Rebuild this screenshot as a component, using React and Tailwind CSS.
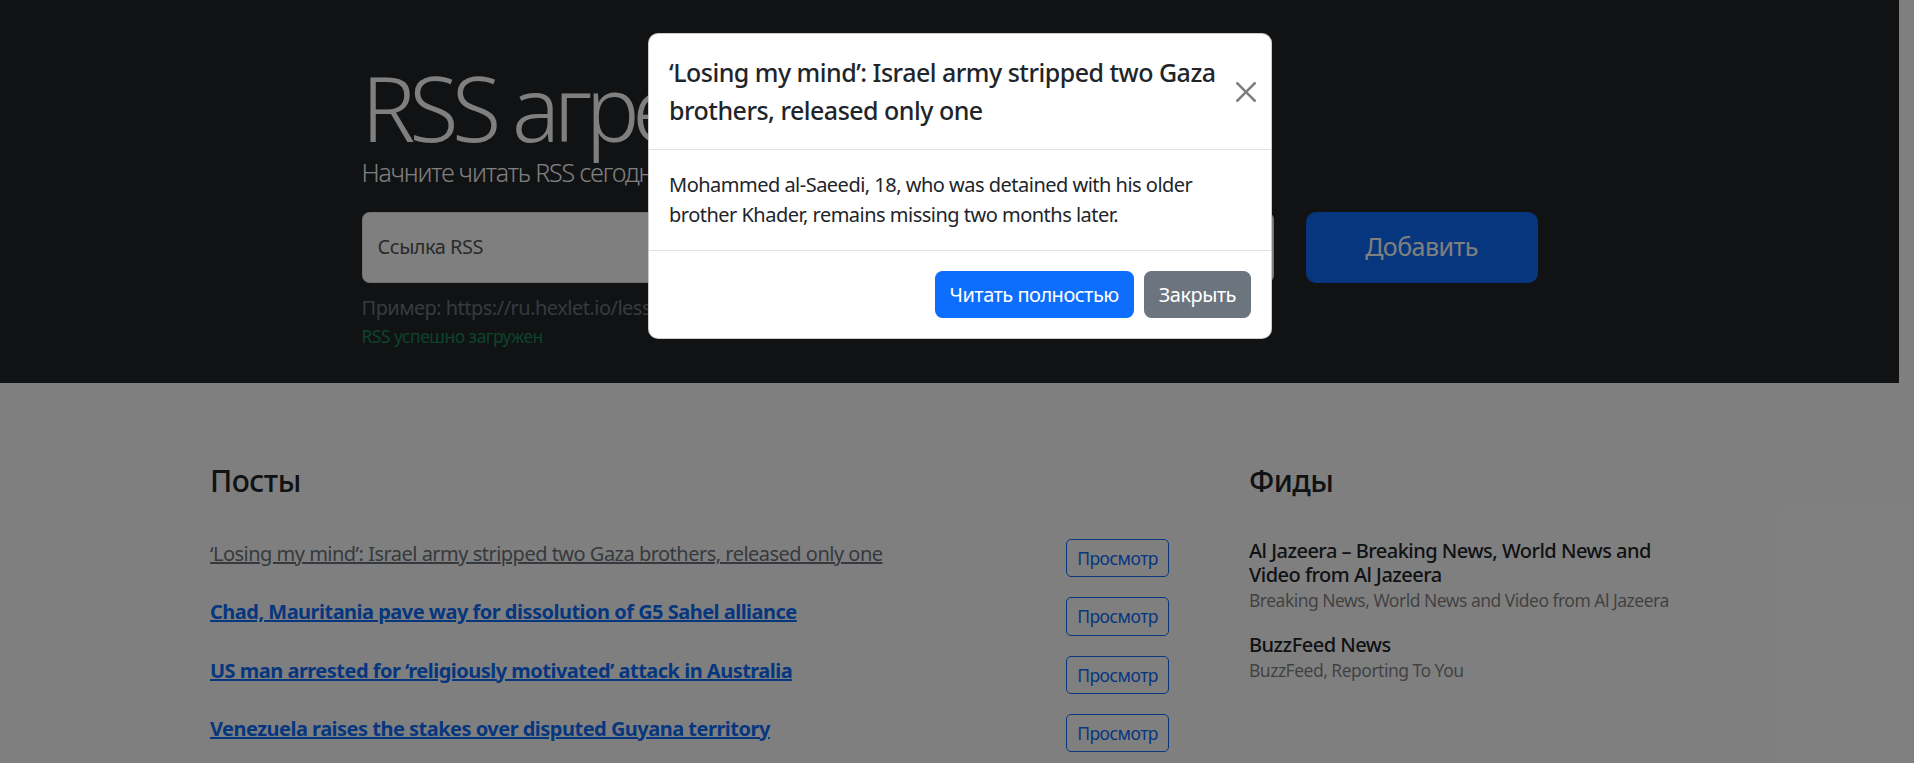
import React from 'react';

const FONT = { fontFamily: '"Noto Sans", "Open Sans", sans-serif' };

const posts = [
  { title: '‘Losing my mind’: Israel army stripped two Gaza brothers, released only one', visited: true },
  { title: 'Chad, Mauritania pave way for dissolution of G5 Sahel alliance', visited: false },
  { title: 'US man arrested for ‘religiously motivated’ attack in Australia', visited: false },
  { title: 'Venezuela raises the stakes over disputed Guyana territory', visited: false },
];

const feeds = [
  {
    title: 'Al Jazeera – Breaking News, World News and Video from Al Jazeera',
    description: 'Breaking News, World News and Video from Al Jazeera',
  },
  { title: 'BuzzFeed News', description: 'BuzzFeed, Reporting To You' },
];

const CloseIcon = () => (
  <svg viewBox="0 0 16 16" className="w-[20px] h-[20px]" fill="currentColor">
    <path d="M.293.293a1 1 0 0 1 1.414 0L8 6.586 14.293.293a1 1 0 1 1 1.414 1.414L9.414 8l6.293 6.293a1 1 0 0 1-1.414 1.414L8 9.414l-6.293 6.293a1 1 0 0 1-1.414-1.414L6.586 8 .293 1.707a1 1 0 0 1 0-1.414z" />
  </svg>
);

const Hero = () => (
  <section className="bg-[#212529] h-[383px] pt-[60px]">
    <div className="relative mx-auto w-[1176px] text-white">
      <h1 className="text-[90px] font-light leading-[94px] tracking-[-0.07em]">RSS агрегатор</h1>
      <p className="text-[25px] font-light leading-[37.5px] mb-[20px] tracking-[-0.045em]">
        Начните читать RSS сегодня! Это легко, это красиво.
      </p>
      <div className="flex gap-[32px]">
        <div className="flex-1 h-[71px] bg-white border border-[#dee2e6] rounded-[7.5px] flex items-center px-[15px]">
          <span className="text-[20px] text-[#212529]/80">Ссылка RSS</span>
        </div>
        <button className="w-[232px] h-[71px] rounded-[10px] bg-[#0d6efd] text-white text-[25px]">
          Добавить
        </button>
      </div>
      <p className="mt-[10px] text-[20px] leading-[30px] text-[#6c757d]">
        Пример: https://ru.hexlet.io/lessons.rss
      </p>
      <p className="absolute text-[17.5px] leading-[26.25px] text-[#198754]">RSS успешно загружен</p>
    </div>
  </section>
);

const Posts = () => (
  <div className="w-[999px]">
    <div className="p-[20px]">
      <h2 className="text-[30px] font-medium leading-[36px] mb-[10px] text-[#212529]">Посты</h2>
    </div>
    <ul>
      {posts.map((p) => (
        <li key={p.title} className="flex justify-between items-start px-[20px] py-[10px]">
          <a
            href="#"
            className={
              p.visited
                ? 'text-[20px] leading-[30px] underline text-[#6c757d]'
                : 'text-[20px] leading-[30px] underline font-bold text-[#0d6efd]'
            }
          >
            {p.title}
          </a>
          <button className="shrink-0 border border-[#0d6efd] text-[#0d6efd] rounded-[5px] px-[10px] py-[5px] text-[17.5px] leading-[26.25px]">
            Просмотр
          </button>
        </li>
      ))}
    </ul>
  </div>
);

const Feeds = () => (
  <div className="w-[484px] ml-[40px]">
    <div className="p-[20px]">
      <h2 className="text-[30px] font-medium leading-[36px] mb-[10px] text-[#212529]">Фиды</h2>
    </div>
    <ul>
      {feeds.map((f) => (
        <li key={f.title} className="px-[20px] py-[10px]">
          <h3 className="text-[20px] font-medium leading-[24px] text-[#212529]">{f.title}</h3>
          <p className="text-[17.5px] leading-[26.25px] text-black/50">{f.description}</p>
        </li>
      ))}
    </ul>
  </div>
);

const Modal = () => (
  <div className="absolute left-[648px] top-[33px] w-[624px] bg-white rounded-[10px] border border-black/20 text-[#212529]">
    <div className="flex items-center justify-between p-[20px] border-b border-[#dee2e6]">
      <h5 className="text-[25px] font-medium leading-[37.5px]">
        ‘Losing my mind’: Israel army stripped two Gaza brothers, released only one
      </h5>
      <button className="shrink-0 ml-auto -mr-[10px] p-[5px] text-black opacity-50">
        <CloseIcon />
      </button>
    </div>
    <div className="p-[20px] text-[20px] leading-[30px]">
      Mohammed al-Saeedi, 18, who was detained with his older brother Khader, remains missing two months later.
    </div>
    <div className="flex justify-end items-center gap-[10px] px-[20px] py-[20px] border-t border-[#dee2e6]">
      <a href="#" className="h-[47px] px-[15px] flex items-center rounded-[7.5px] bg-[#0d6efd] text-white text-[20px]">
        Читать полностью
      </a>
      <button className="h-[47px] px-[15px] rounded-[7.5px] bg-[#6c757d] text-white text-[20px]">
        Закрыть
      </button>
    </div>
  </div>
);

export default function App() {
  return (
    <div className="relative h-[763px] w-full overflow-hidden bg-white tracking-[-0.032em]" style={FONT}>
      <div className="pr-[15px]">
        <Hero />
        <section className="flex pt-[60px] pl-[190px]">
          <Posts />
          <Feeds />
        </section>
      </div>
      <div className="absolute inset-0 bg-black/50" />
      <Modal />
    </div>
  );
}
